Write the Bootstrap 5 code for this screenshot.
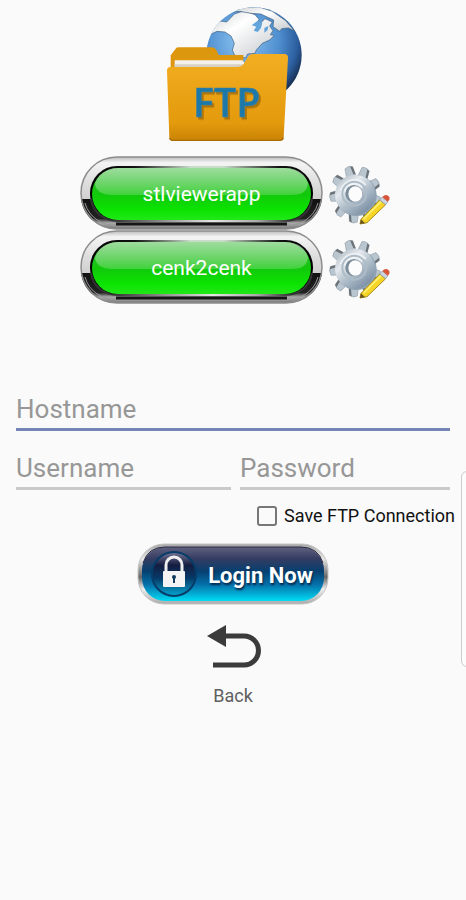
<!DOCTYPE html>
<html lang="en">
<head>
<meta charset="utf-8">
<meta name="viewport" content="width=device-width, initial-scale=1">
<title>FTP connection</title>
<link href="https://cdn.jsdelivr.net/npm/bootstrap@5.3.0/dist/css/bootstrap.min.css" rel="stylesheet">
<style>
body { background: #fafafa; font-family: Roboto, sans-serif; overflow-x: hidden; }
.logo { width: 160px; height: 150px; }
.logo text { filter: drop-shadow(6px 7px 2px #85590899); }
.saved-list { padding-top: 6px; padding-left: 5px; }
.saved-row { gap: 6px; }
.art-btn { display: grid; place-items: center; border: 0; padding: 0; background: none; color: #fff; }
.art-btn > * { grid-area: 1 / 1; }
.pill { font-size: 21px; line-height: 26px; }
.pill span { padding-top: 2px; }
.pill svg { width: 243px; height: 74px; display: block; }
.gear-btn svg { width: 62px; height: 64px; display: block; }
.ftp-form { margin-top: 86px; padding: 0 16px; }
.line-input { border: 0; border-bottom: 3px solid #cacaca; border-radius: 0; background: none; padding: 0; width: 100%; height: 41px; font-size: 26px; line-height: 32px; color: #333; outline: 0; }
.line-input::placeholder { color: #979797; opacity: 1; }
.line-input.active { border-color: #7584b5; }
.pair { display: grid; grid-template-columns: 43fr 42fr; gap: 9px; margin-top: 18px; }
.save-row { gap: 7px; margin: 14px -5px 0 0; font-size: 18px; line-height: 24px; color: #111; }
.save-row input { appearance: none; width: 20px; height: 20px; margin: 0; border: 2px solid #777; border-radius: 3px; }
.save-row input:checked { background: #7584b5; }
.login-btn { margin-top: 15px; }
.login-btn svg { width: 192px; height: 62px; display: block; }
.login-text { padding: 4px 0 0 55px; font-size: 22px; line-height: 26px; font-weight: 700; text-shadow: 1px 2px 2px #012a50; }
.back-link { margin-top: 18px; color: #606060; font-size: 18px; line-height: 22px; }
.back-link svg { width: 60px; height: 46px; margin-bottom: 16px; }
.edge-panel { position: absolute; right: -10px; top: 471px; width: 15px; height: 196px; border: 1px solid #ccc; border-radius: 6px; background: #fcfcfc; }
</style>
</head>
<body>
<svg width="0" height="0" class="position-absolute" aria-hidden="true">
  <defs>
    <linearGradient id="rimLight" x2="0" y2="1"><stop offset="0" stop-color="#bbb"/><stop offset=".08" stop-color="#f4f4f4"/><stop offset=".35" stop-color="#dedede"/><stop offset=".6" stop-color="#cfcfcf"/></linearGradient>
    <linearGradient id="rimDark" x2="0" y2="1"><stop offset="0" stop-color="#111"/><stop offset=".65" stop-color="#222"/><stop offset=".8" stop-color="#aaa"/><stop offset="1" stop-color="#777"/></linearGradient>
    <linearGradient id="green" x2="0" y2="1"><stop offset="0" stop-color="#3cb83c"/><stop offset=".5" stop-color="#12c70c"/><stop offset=".8" stop-color="#0be300"/><stop offset="1" stop-color="#20e818"/></linearGradient>
    <linearGradient id="gloss" x2="0" y2="1"><stop offset="0" stop-color="#fff" stop-opacity=".5"/><stop offset="1" stop-color="#fff" stop-opacity=".2"/></linearGradient>
    <linearGradient id="lipTop"><stop offset="0" stop-color="#000"/><stop offset=".2" stop-color="#111"/><stop offset=".45" stop-color="#c8dcc8"/><stop offset=".6" stop-color="#c8dcc8"/><stop offset=".85" stop-color="#111"/><stop offset="1" stop-color="#000"/></linearGradient>
    <linearGradient id="lipLow"><stop offset=".1" stop-color="#333"/><stop offset=".35" stop-color="#999"/><stop offset=".55" stop-color="#e4e4e4"/><stop offset=".75" stop-color="#aaa"/><stop offset=".9" stop-color="#333"/></linearGradient>
    <linearGradient id="steel" x2=".8" y2="1"><stop offset="0" stop-color="#a3afb8"/><stop offset=".35" stop-color="#e4e9ee"/><stop offset=".6" stop-color="#b2c0cb"/><stop offset="1" stop-color="#7489a0"/></linearGradient>
    <symbol id="pillArt" viewBox="0 0 243 74">
      <rect x="1" y="1" width="241" height="72" rx="36" fill="url(#rimLight)"/>
      <path d="M1 43H242C239 63 223 73 206 73H37C20 73 4 63 1 43Z" fill="url(#rimDark)"/>
      <rect x="1" y="1" width="241" height="72" rx="36" fill="none" stroke="#8c8c8c" stroke-width="1.5"/>
      <path d="M5 47C9 62 23 70 38 70H205C220 70 234 62 238 47" fill="none" stroke="#999" stroke-width="1"/>
      <rect x="10" y="10" width="223" height="55" rx="27" fill="url(#lipTop)"/>
      <path d="M11 43C13 57 25 65 38 65H205C218 65 230 57 232 43" fill="none" stroke="url(#lipLow)" stroke-width="2"/>
      <path d="M36 68H207" stroke="#151515" stroke-width="3"/>
      <rect x="12" y="12" width="219" height="52" rx="26" fill="url(#green)"/>
      <path d="M38 12H205C219 12 227 20 228 28C227 36 221 39 211 39H32C22 39 16 35 15 28C17 20 25 12 38 12Z" fill="url(#gloss)"/>
    </symbol>
    <symbol id="gearArt" viewBox="22 12 186 192">
      <g transform="translate(101 112) scale(.88 .98)">
        <g id="tooth" transform="rotate(-15)">
          <path d="M-16 -50L-14 -84Q0 -92 13 -84L17 -50Z" fill="#b9c5cf" stroke="#909da8" stroke-width="2"/>
          <path d="M5 -87L13 -84L17 -60L10 -60Z" fill="#6a7278"/>
        </g>
        <use href="#tooth" transform="rotate(40)"/><use href="#tooth" transform="rotate(80)"/>
        <use href="#tooth" transform="rotate(120)"/><use href="#tooth" transform="rotate(160)"/>
        <use href="#tooth" transform="rotate(200)"/><use href="#tooth" transform="rotate(240)"/>
        <use href="#tooth" transform="rotate(280)"/><use href="#tooth" transform="rotate(320)"/>
      </g>
      <circle cx="104" cy="116" r="61" fill="#8fa2b2"/>
      <circle cx="100" cy="113" r="60" fill="url(#steel)"/>
      <path d="M54 98A48 48 0 0 1 135 82L116 96A24 24 0 0 0 76 106Z" fill="#f7f9fb" opacity=".7"/>
      <circle cx="98" cy="110" r="36" fill="none" stroke="#aebcc8" stroke-width="6"/>
      <circle cx="97" cy="110" r="26" fill="#7b8c9b"/>
      <ellipse cx="101" cy="111" rx="21" ry="23" fill="#fcfcfc"/>
      <path d="M118 187L174 129L192 143L136 197L115 201Z" fill="#f6d526" stroke="#a68c22" stroke-width="3"/>
      <path d="M126 186L178 134" stroke="#fff077" stroke-width="5"/>
      <path d="M115 201L118 187L130 199Z" fill="#6b5420"/>
      <path d="M174 129L182 120L199 134L192 143Z" fill="#cbd3df" stroke="#8996a2" stroke-width="2"/>
      <path d="M182 120Q192 109 201 118Q208 126 198 134Z" fill="#d9563c"/>
    </symbol>
  </defs>
</svg>

<main class="d-flex flex-column">
  <svg class="logo align-self-center" viewBox="-6 0 480 450" role="img" aria-label="FTP">
    <defs>
      <radialGradient id="sea" cx=".38" cy=".35" r=".7"><stop offset="0" stop-color="#8fc6f2"/><stop offset=".55" stop-color="#4f8fd0"/><stop offset=".82" stop-color="#2c5f9f"/><stop offset="1" stop-color="#15294a"/></radialGradient>
      <linearGradient id="land" x2="1" y2="1"><stop offset="0" stop-color="#c9ccce"/><stop offset=".4" stop-color="#fff"/><stop offset="1" stop-color="#c4c8cc"/></linearGradient>
      <linearGradient id="folder" x2="0" y2="1"><stop offset="0" stop-color="#f3ae21"/><stop offset=".8" stop-color="#e39a0c"/><stop offset="1" stop-color="#c98305"/></linearGradient>
      <clipPath id="globe"><circle cx="297" cy="165" r="143"/></clipPath>
    </defs>
    <circle cx="297" cy="165" r="143" fill="url(#sea)"/>
    <g clip-path="url(#globe)" fill="url(#land)" stroke="#3c5f82" stroke-width="2">
      <path d="M150 100L190 62L215 66L238 42L268 32L300 44L312 58L304 72L318 68L330 56L352 66L344 78L354 92L346 104L358 106L344 120L322 130L304 150L300 160L278 162L272 174L240 168L232 150L238 130L228 108L210 96L186 94L164 104Z"/>
      <path d="M226 36L262 22L310 20L352 34L392 62L418 92L400 84L380 86L374 94L354 80L356 60L330 48L318 42L288 40L254 34Z"/>
    </g>
    <path d="M290 76L306 64L322 68L318 84L308 96L296 92L304 80ZM328 84L340 78L338 90L328 98Z" fill="#62a5da"/>
    <path d="M47 220V166L62 146Q64 142 72 142H170Q180 142 184 150L191 165H265V220Z" fill="#dd970f"/>
    <path d="M59 181H262L278 200V225H59Z" fill="#f4f1ec"/>
    <path d="M59 193H270V206H59Z" fill="#d6d0c5"/>
    <path d="M36 212Q36 201 46 201H246Q260 201 266 192L278 172Q284 162 294 162H388Q399 162 399 173L386 412Q385 422 375 422H53Q43 422 43 412Z" fill="url(#folder)"/>
    <path d="M44 414Q46 421 54 421H375Q383 421 385 413" fill="none" stroke="#a96d06" stroke-width="4"/>
    <text x="114" y="350" font-family="'Open Sans', sans-serif" font-weight="600" font-size="118" fill="#1d78aa" stroke="#3c82a4" stroke-width="2">FTP</text>
  </svg>

  <section class="saved-list d-flex flex-column align-items-center" aria-label="Saved connections">
    <div class="saved-row d-flex align-items-center">
      <button type="button" class="art-btn pill"><svg aria-hidden="true"><use href="#pillArt"/></svg><span>stlviewerapp</span></button>
      <button type="button" class="art-btn gear-btn" aria-label="Edit stlviewerapp"><svg aria-hidden="true"><use href="#gearArt"/></svg></button>
    </div>
    <div class="saved-row d-flex align-items-center">
      <button type="button" class="art-btn pill"><svg aria-hidden="true"><use href="#pillArt"/></svg><span>cenk2cenk</span></button>
      <button type="button" class="art-btn gear-btn" aria-label="Edit cenk2cenk"><svg aria-hidden="true"><use href="#gearArt"/></svg></button>
    </div>
  </section>

  <form class="ftp-form d-flex flex-column">
    <input class="line-input active" type="text" placeholder="Hostname" aria-label="Hostname">
    <div class="pair">
      <input class="line-input" type="text" placeholder="Username" aria-label="Username">
      <input class="line-input" type="password" placeholder="Password" aria-label="Password">
    </div>
    <div class="save-row d-flex align-items-center justify-content-end">
      <input type="checkbox" id="save"><label for="save">Save FTP Connection</label>
    </div>
    <button type="button" class="art-btn login-btn align-self-center">
      <svg viewBox="0 0 192 62" aria-hidden="true">
        <defs>
          <linearGradient id="chrome" x2="0" y2="1"><stop offset="0" stop-color="#a5a5a5"/><stop offset=".25" stop-color="#e8e8e8"/><stop offset=".55" stop-color="#666"/><stop offset=".75" stop-color="#eee"/><stop offset="1" stop-color="#aaa"/></linearGradient>
          <linearGradient id="blue" x2="0" y2="1"><stop offset="0" stop-color="#61617f"/><stop offset=".22" stop-color="#343c62"/><stop offset=".45" stop-color="#064070"/><stop offset=".7" stop-color="#0572ab"/><stop offset="1" stop-color="#00dcf5"/></linearGradient>
          <linearGradient id="disc" x2="0" y2="1"><stop offset="0" stop-color="#77779a"/><stop offset=".3" stop-color="#141c40"/><stop offset=".6" stop-color="#063b69"/><stop offset="1" stop-color="#03a5d2"/></linearGradient>
        </defs>
        <rect x="1" y="1" width="190" height="60" rx="26" fill="url(#chrome)" stroke="#c4c4c4"/>
        <rect x="5" y="4" width="182" height="54" rx="23" fill="url(#blue)"/>
        <path d="M6 20Q11 4 28 4H164Q181 4 186 20" fill="none" stroke="#292b40" stroke-width="1"/>
        <circle cx="37" cy="31" r="22" fill="url(#disc)" stroke="#063c68" stroke-width="2"/>
        <path d="M29 30V22A8 8 0 0 1 45 22V30" fill="none" stroke="#eee" stroke-width="3"/>
        <rect x="26" y="28" width="22" height="16" rx="1" fill="#f4f4f4"/>
        <circle cx="37" cy="34" r="2" fill="#123b60"/><path d="M36 34H38V40H36Z" fill="#123b60"/>
      </svg>
      <span class="login-text">Login Now</span>
    </button>
  </form>

  <a href="#" class="back-link d-flex flex-column align-items-center align-self-center text-decoration-none">
    <svg viewBox="-4 0 60 46" aria-hidden="true">
      <path d="M16 13H37A14 14 0 0 1 37 42H6" fill="none" stroke="#3b3b3b" stroke-width="5"/>
      <path d="M0 13L19 2V24Z" fill="#3b3b3b"/>
    </svg>
    <span>Back</span>
  </a>
</main>
<div class="edge-panel"></div>
<script src="https://cdn.jsdelivr.net/npm/bootstrap@5.3.0/dist/js/bootstrap.bundle.min.js"></script>
</body>
</html>
